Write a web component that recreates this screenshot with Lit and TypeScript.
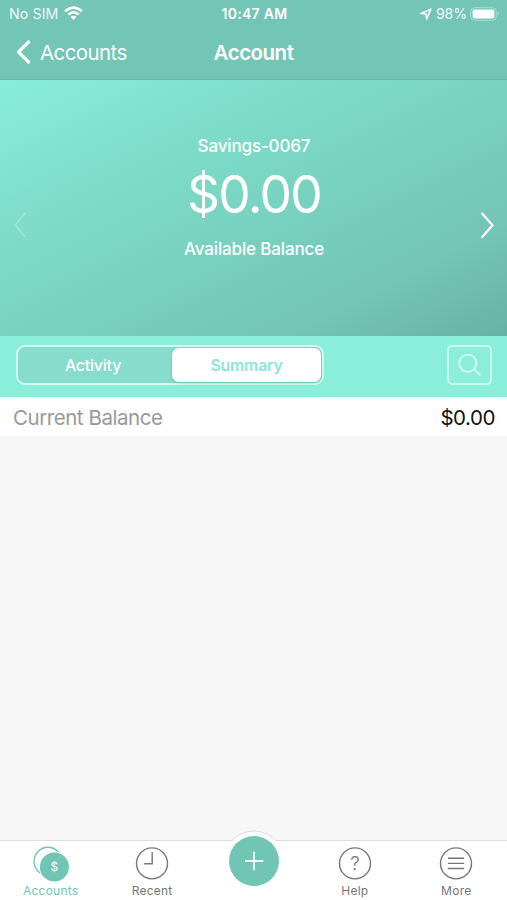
import { LitElement, html, css, svg } from "lit";
import { customElement, state } from "lit/decorators.js";

const tabIcons = {
  accounts: svg`<circle cx="17" cy="18.3" r="14" fill="none" stroke="#70c5b4" stroke-width="1.4"/><circle cx="23.4" cy="24" r="15.4" fill="#fff"/><circle cx="23.4" cy="24" r="14.5" fill="#70c5b4"/><text x="23.4" y="28.3" class="coin">$</text>`,
  recent: svg`<circle cx="20" cy="20.4" r="15.5"/><path d="M20.2 9V20.7H12.2"/>`,
  help: svg`<circle cx="20" cy="20.4" r="15.5"/><text x="20.2" y="27.1" class="mark">?</text>`,
  more: svg`<circle cx="20" cy="20.4" r="15.5"/><path d="M11.9 15.3H28.1M11.9 20.4H28.1M11.9 25.5H28.1"/>`,
};

@customElement("app-root")
export class AppRoot extends LitElement {
  static styles = css`
    :host {
      display: flex;
      flex-direction: column;
      width: 507px;
      height: 900px;
      overflow: hidden;
      background: #f7f7f7;
      font-family: Inter, "Liberation Sans", sans-serif;
      color: #fff;
    }
    * { box-sizing: border-box; }
    svg { display: block; flex: none; }
    .top { height: 80px; background: #73c5b5; border-bottom: 1px solid #69b9a9; flex: none; }
    .grid { display: grid; grid-template-columns: 1fr auto 1fr; align-items: center; }
    .status { height: 27px; padding: 0 7px 0 9px; font-size: 14.2px; }
    .side { display: flex; align-items: center; }
    .end { justify-content: flex-end; }
    .carrier { letter-spacing: 0.1px; margin-right: 5px; opacity: .9; }
    .time { font-weight: 600; font-size: 14px; letter-spacing: 0.3px; }
    .percent { margin: 0 3px 0 4px; opacity: .9; letter-spacing: -0.15px; }
    .nav { height: 50px; padding: 0 15px; }
    .back { font-size: 20.5px; gap: 8px; letter-spacing: -0.6px; }
    .title { font-size: 20.5px; font-weight: 600; letter-spacing: -0.5px; }
    .hero {
      height: 256px;
      flex: none;
      display: flex;
      justify-content: space-between;
      padding: 0 12px 0 13px;
      background: linear-gradient(to bottom right, #8aeeda 0%, #80dfcc 25%, #79d3c1 50%, #73c5b5 78%, #67b2a3 100%);
    }
    .arrow { margin-top: 130px; }
    .dim { opacity: .25; }
    .balance { display: flex; flex-direction: column; align-items: center; padding-top: 55px; }
    .label { font-size: 17px; line-height: 22px; font-weight: 500; letter-spacing: -0.15px; }
    .amount { font-size: 51.5px; line-height: 62px; margin: 6px 0 13px; font-weight: 400; letter-spacing: -1.7px; }
    .controls {
      height: 61px;
      flex: none;
      display: flex;
      align-items: center;
      justify-content: space-between;
      padding: 0 15px 3px 16px;
      background: #8aeeda;
    }
    .segments {
      display: flex;
      width: 308px;
      height: 40px;
      padding: 1px 1px 1px 0;
      border: 2px solid #d3f9f1;
      border-radius: 9px;
      background: #86ddcc;
    }
    .segment {
      width: 154px;
      display: flex;
      align-items: center;
      justify-content: center;
      padding-right: 4px;
      font-size: 15.8px;
      font-weight: 500;
      letter-spacing: -0.15px;
      border-radius: 7px;
    }
    .on { width: 149px; padding-right: 0; background: #fff; color: #8ce6d5; font-weight: 600; box-shadow: 0 1px 3px #3d9d8b66; }
    .search {
      width: 45px;
      height: 40px;
      display: grid;
      place-items: center;
      border: 2px solid #c9f8ee;
      border-radius: 5px;
    }
    .row {
      height: 39px;
      flex: none;
      display: flex;
      align-items: center;
      justify-content: space-between;
      padding: 1px 12px 0 13px;
      background: #fff;
      color: #999;
      font-size: 20.5px;
      letter-spacing: -0.45px;
    }
    .value { color: #111; }
    .space { flex: 1; }
    .tabs {
      position: relative;
      height: 60px;
      flex: none;
      display: grid;
      grid-template-columns: repeat(5, 1fr);
      background: #fff;
      border-top: 1px solid #dedede;
    }
    .tab {
      display: flex;
      flex-direction: column;
      align-items: center;
      padding-top: 2px;
      font-size: 12px;
      letter-spacing: 0.25px;
      line-height: 15px;
      color: #777;
    }
    .tab svg { fill: none; stroke: #777; stroke-width: 1.4; }
    .active { color: #70c5b4; }
    .coin { font: 400 12px Inter, sans-serif; fill: #fff; stroke: none; text-anchor: middle; }
    .mark { font: 300 19px Inter, sans-serif; fill: #777; stroke: none; text-anchor: middle; }
    .active svg circle { stroke: none; }
    .active svg circle:first-child { stroke: #70c5b4; }
    .add { position: absolute; left: 223px; top: -11px; }
  `;

  @state() private selected = "Summary";

  render() {
    return html`
      <header class="top">
        <div class="status grid">
          <div class="side">
            <span class="carrier">No SIM</span>
            <svg width="19" height="15" viewBox="0 0 19 15" fill="none" stroke="#fff" stroke-width="2.5">
              <path d="M1.2 5.2Q9.5-2 17.8 5.2M4.3 8.6Q9.5 4.1 14.7 8.6"/>
              <path d="M6.6 11Q9.5 8.3 12.4 11L9.5 14Z" fill="#fff" stroke="none"/>
            </svg>
          </div>
          <span class="time">10:47 AM</span>
          <div class="side end">
            <svg width="12" height="12" viewBox="0 0 12 12"><path d="M1 5.5 10.8 1.2 6.7 11 6 6Z" fill="none" stroke="#fff" stroke-width="1.6" stroke-linejoin="round"/></svg>
            <span class="percent">98%</span>
            <svg width="30" height="14" viewBox="0 0 30 14">
              <rect x=".7" y=".7" width="25.6" height="12.6" rx="4" fill="none" stroke="#fff" stroke-opacity=".4"/>
              <rect x="2.6" y="2.5" width="21.8" height="9" rx="1.8" fill="#fff"/>
              <path d="M27.7 4.8Q30 7 27.7 9.2Z" fill="#fff" opacity=".5"/>
            </svg>
          </div>
        </div>
        <div class="nav grid">
          <div class="side back">
            <svg width="17" height="26" viewBox="0 0 17 26"><path d="M13.7 3 3.5 13 13.7 23" fill="none" stroke="#fff" stroke-width="3.2" stroke-linecap="round" stroke-linejoin="round"/></svg>
            <span>Accounts</span>
          </div>
          <span class="title">Account</span>
          <span></span>
        </div>
      </header>
      <section class="hero">
        <svg class="arrow dim" width="16" height="30" viewBox="0 0 16 30"><path d="M12 3 2.5 15 12 27" fill="none" stroke="#fff" stroke-width="1.8"/></svg>
        <div class="balance">
          <span class="label">Savings-0067</span>
          <span class="amount">$0.00</span>
          <span class="label">Available Balance</span>
        </div>
        <svg class="arrow" width="16" height="30" viewBox="0 0 16 30"><path d="M2.5 2.8 13.5 15.3 2.5 27.8" fill="none" stroke="#fff" stroke-width="2.2"/></svg>
      </section>
      <section class="controls">
        <div class="segments">
          ${["Activity", "Summary"].map(
            (name) => html`<div class="segment ${name === this.selected ? "on" : ""}" @click=${() => (this.selected = name)}>${name}</div>`
          )}
        </div>
        <div class="search">
          <svg width="24" height="24" viewBox="0 0 24 24" fill="none" stroke="#d8faf3" stroke-width="1.7"><circle cx="9.8" cy="10.2" r="8.6"/><path d="M16 16.3 22.4 22.2"/></svg>
        </div>
      </section>
      <section class="row"><span>Current Balance</span><span class="value">$0.00</span></section>
      <main class="space"></main>
      <nav class="tabs">
        ${this.tab("Accounts", tabIcons.accounts, true)}
        ${this.tab("Recent", tabIcons.recent)}
        <span></span>
        ${this.tab("Help", tabIcons.help)}
        ${this.tab("More", tabIcons.more)}
        <svg class="add" width="62" height="60" viewBox="0 0 62 60">
          <path d="M9 11.5A31 31 0 0 1 53 11.5V30H9Z" fill="#fff"/>
          <path d="M8 11.2A31 31 0 0 1 54 11.2" fill="none" stroke="#dedede"/>
          <circle cx="31" cy="31" r="25" fill="#70c5b4"/>
          <path d="M22 31H40.3M31 21.8V40.2" stroke="#fff" stroke-width="1.8"/>
        </svg>
      </nav>
    `;
  }

  private tab(name: string, icon: unknown, active = false) {
    return html`<div class="tab ${active ? "active" : ""}">
      <svg width="40" height="40" viewBox="0 0 40 40">${icon}</svg><span>${name}</span>
    </div>`;
  }
}
